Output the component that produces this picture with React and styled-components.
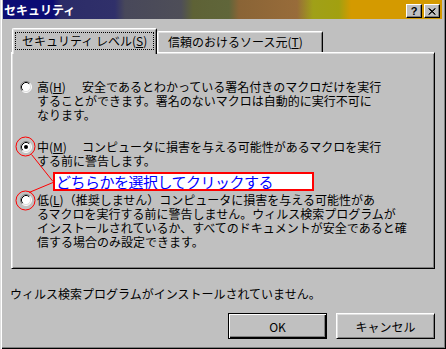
import React from "react";
import styled, { createGlobalStyle } from "styled-components";

const GlobalStyle = createGlobalStyle`
  html, body { margin: 0; padding: 0; background: #c0c0c0; }
  body {
    font-family: "Noto Sans CJK JP", "Noto Sans", sans-serif;
    font-size: 12px;
    color: #000;
  }
`;

const Window = styled.div`
  position: relative;
  width: 446px;
  height: 349px;
  box-sizing: border-box;
  background: #c0c0c0;
  padding: 0 4px 2px 3px;
  box-shadow: inset 1px 0 #dfdfdf, inset 2px 0 #fff, inset -1px -1px #000,
    inset -2px -2px #808080;
  display: flex;
  flex-direction: column;
`;

const TitleBar = styled.div`
  height: 19px;
  display: flex;
  align-items: flex-start;
  padding: 0 2px 0 1px;
  background: linear-gradient(
    90deg,
    #0c0c74 0px,
    #0c0c74 50px,
    #2c2c68 58px,
    #30306a 112px,
    #48485a 122px,
    #4e4e58 178px,
    #5e6236 190px,
    #60663a 226px,
    #8a6436 236px,
    #986c3a 294px,
    #a0a018 310px,
    #a2a010 336px,
    #d49a00 348px,
    #d49a00 100%
  );
`;

const Title = styled.div`
  flex: 1;
  color: #fff;
  font-weight: bold;
  font-size: 12px;
  line-height: 14px;
  padding-top: 3px;
`;

const TitleButtons = styled.div`
  display: flex;
  gap: 2px;
  padding-top: 4px;
`;

const TitleButton = styled.div`
  box-sizing: border-box;
  width: 16px;
  height: 14px;
  background: #c0c0c0;
  border-top: 1px solid #fff;
  border-left: 1px solid #fff;
  border-right: 1px solid #000;
  border-bottom: 1px solid #000;
  box-shadow: inset -1px -1px #808080;
  display: flex;
  align-items: center;
  justify-content: center;
  font-family: "Liberation Sans", Arial, sans-serif;
  font-weight: bold;
  font-size: 11px;
  line-height: 11px;
`;

const Body = styled.div`
  display: flex;
  flex-direction: column;
  padding: 0 7px 0 8px;
`;

const TabStrip = styled.div`
  position: relative;
  z-index: 1;
  display: flex;
  align-items: flex-end;
  height: 24px;
  margin-top: 9px;
  padding-left: 1px;
`;

const Tab = styled.div`
  box-sizing: border-box;
  width: ${(p) => p.$w}px;
  height: ${(p) => (p.$active ? 26 : 21)}px;
  margin-bottom: ${(p) => (p.$active ? -2 : 0)}px;
  background: #c0c0c0;
  border-top: 1px solid #fff;
  border-left: 1px solid #fff;
  border-right: 1px solid #000;
  border-radius: 2px 2px 0 0;
  box-shadow: inset 1px 1px #dfdfdf, inset -1px 0 #808080;
  padding: ${(p) => (p.$active ? "3px 2px 0 2px" : "0 0 0 10px")};
  display: flex;
  align-items: ${(p) => (p.$active ? "flex-start" : "center")};
  white-space: nowrap;
  line-height: 14px;
`;

const Focus = styled.div`
  box-sizing: border-box;
  width: 139px;
  height: 18px;
  border: 1px dotted #000;
  padding-left: 6px;
  display: flex;
  align-items: center;
`;

const Key = styled.span`
  text-decoration: underline;
  text-underline-offset: 1px;
`;

const Panel = styled.div`
  box-sizing: border-box;
  height: 217px;
  border-top: 1px solid #fff;
  border-left: 1px solid #fff;
  border-right: 1px solid #000;
  border-bottom: 1px solid #000;
  box-shadow: inset 1px 1px #dfdfdf, inset -1px -1px #808080;
  padding: 27px 8px 0 8px;
  display: flex;
  flex-direction: column;
`;

const Option = styled.div`
  display: flex;
  gap: 5px;
  margin-top: ${(p) => p.$top || 0}px;
`;

const RadioBox = styled.svg`
  flex: none;
  width: 12px;
  height: 12px;
  margin-top: 1px;
`;

const Text = styled.div`
  line-height: 14px;
  white-space: nowrap;
`;

const Label = styled.span`
  display: inline-block;
  width: ${(p) => p.$w}px;
`;

const Status = styled.div`
  margin: 18px 0 0 -1px;
  line-height: 14px;
  white-space: nowrap;
`;

const ButtonRow = styled.div`
  display: flex;
  justify-content: flex-end;
  gap: 9px;
  margin-top: 12px;
`;

const Button = styled.div`
  box-sizing: border-box;
  width: 99px;
  height: 26px;
  background: #c0c0c0;
  display: flex;
  align-items: center;
  justify-content: center;
  font-size: 12px;
  border-top: 1px solid ${(p) => (p.$default ? "#000" : "#fff")};
  border-left: 1px solid ${(p) => (p.$default ? "#000" : "#fff")};
  border-right: 1px solid #000;
  border-bottom: 1px solid #000;
  box-shadow: ${(p) =>
    p.$default
      ? "inset 1px 1px #fff, inset -1px -1px #000, inset -2px -2px #808080"
      : "inset 1px 1px #dfdfdf, inset -1px -1px #808080"};
`;

const Overlay = styled.svg`
  position: absolute;
  left: 0;
  top: 0;
  z-index: 2;
  pointer-events: none;
`;

const Callout = styled.div`
  position: absolute;
  z-index: 3;
  left: 53px;
  top: 172px;
  width: 261px;
  height: 19px;
  box-sizing: border-box;
  border: 2px solid #ff0000;
  background: #fff;
  color: #0000ff;
  font-size: 15px;
  line-height: 15px;
  letter-spacing: -0.5px;
  padding-left: 1px;
  white-space: nowrap;
  overflow: hidden;
`;

function Radio({ checked }) {
  return (
    <RadioBox viewBox="0 0 12 12">
      <circle cx="6" cy="6" r="5" fill="#fff" />
      <path d="M2.11 9.89 A5.5 5.5 0 0 1 9.89 2.11" stroke="#808080" fill="none" />
      <path d="M9.89 2.11 A5.5 5.5 0 0 1 2.11 9.89" stroke="#fff" fill="none" />
      <path d="M2.82 9.18 A4.5 4.5 0 0 1 9.18 2.82" stroke="#000" fill="none" />
      <path d="M9.18 2.82 A4.5 4.5 0 0 1 2.82 9.18" stroke="#dfdfdf" fill="none" />
      {checked && <circle cx="6" cy="6" r="2" fill="#000" />}
    </RadioBox>
  );
}

export default function App() {
  return (
    <>
      <GlobalStyle />
      <Window>
        <TitleBar>
          <Title>セキュリティ</Title>
          <TitleButtons>
            <TitleButton>?</TitleButton>
            <TitleButton>
              <svg width="8" height="7" viewBox="0 0 8 7">
                <path d="M0.5 0.5 L7 6.5 M1.5 0.5 L7.5 6.5 M7 0.5 L0.5 6.5 M7.5 0.5 L1 6.5" stroke="#000" strokeWidth="1" />
              </svg>
            </TitleButton>
          </TitleButtons>
        </TitleBar>

        <Body>
          <TabStrip>
            <Tab $active $w={145}>
              <Focus>
                セキュリティ レベル(<Key>S</Key>)
              </Focus>
            </Tab>
            <Tab $w={166}>
              信頼のおけるソース元(<Key>T</Key>)
            </Tab>
          </TabStrip>

          <Panel>
            <Option>
              <Radio />
              <Text>
                <Label $w={45}>
                  高(<Key>H</Key>)
                </Label>
                安全であるとわかっている署名付きのマクロだけを実行
                <br />
                することができます。署名のないマクロは自動的に実行不可に
                <br />
                なります。
              </Text>
            </Option>
            <Option $top={18}>
              <Radio checked />
              <Text>
                <Label $w={45}>
                  中(<Key>M</Key>)
                </Label>
                コンピュータに損害を与える可能性があるマクロを実行
                <br />
                する前に警告します。
              </Text>
            </Option>
            <Option $top={25}>
              <Radio />
              <Text>
                低(<Key>L</Key>)（推奨しません）コンピュータに損害を与える可能性があ
                <br />
                るマクロを実行する前に警告しません。ウィルス検索プログラムが
                <br />
                インストールされているか、すべてのドキュメントが安全であると確
                <br />
                信する場合のみ設定できます。
              </Text>
            </Option>
          </Panel>

          <Status>ウィルス検索プログラムがインストールされていません。</Status>

          <ButtonRow>
            <Button $default>OK</Button>
            <Button>キャンセル</Button>
          </ButtonRow>
        </Body>

        <Overlay width="446" height="349" viewBox="0 0 446 349">
          <circle cx="25.5" cy="146.5" r="9.5" stroke="#ff0000" fill="none" />
          <circle cx="25.5" cy="200.5" r="9.5" stroke="#ff0000" fill="none" />
          <line x1="53" y1="181.5" x2="31.5" y2="154.5" stroke="#ff0000" />
          <line x1="53" y1="182.5" x2="29" y2="192.5" stroke="#ff0000" />
        </Overlay>
        <Callout>どちらかを選択してクリックする</Callout>
      </Window>
    </>
  );
}
